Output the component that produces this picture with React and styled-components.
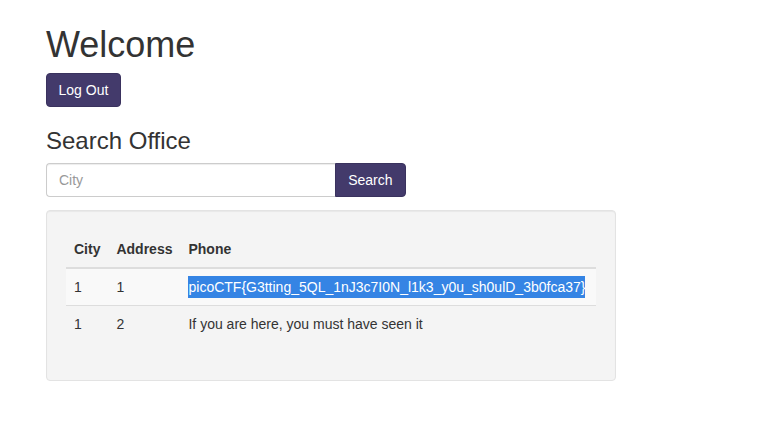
import React from 'react';
import styled, { createGlobalStyle } from 'styled-components';

const GlobalStyle = createGlobalStyle`
  html, body {
    margin: 0;
    padding: 0;
    background: #fff;
  }
  body {
    font-family: "Liberation Sans", Arial, Helvetica, sans-serif;
    font-size: 14px;
    line-height: 1.42857;
    color: #333;
  }
  * {
    box-sizing: border-box;
  }
`;

const Container = styled.div`
  padding: 3px 0 0 46px;
`;

const Title = styled.h1`
  font-size: 36px;
  font-weight: 500;
  line-height: 1.1;
  margin: 22px 0 8px;
`;

const Subtitle = styled.h3`
  font-size: 24px;
  font-weight: 500;
  line-height: 1.1;
  margin: 21px 0 9px;
`;

const Button = styled.button`
  display: inline-block;
  height: 34px;
  padding: ${(p) => (p.$attached ? '6px 12.5px' : '6px 11.5px')};
  font-family: inherit;
  font-size: 14px;
  line-height: 20px;
  color: #fff;
  background-color: #433a6b;
  border: 1px solid #3a325e;
  border-radius: ${(p) => (p.$attached ? '0 4px 4px 0' : '4px')};
  cursor: pointer;
`;

const SearchGroup = styled.form`
  display: flex;
  width: 360px;
  margin-bottom: 13px;
`;

const Input = styled.input`
  width: 289px;
  height: 34px;
  padding: 6px 12px;
  font-family: inherit;
  font-size: 14px;
  color: #555;
  background: #fff;
  border: 1px solid #ccc;
  border-right: none;
  border-radius: 4px 0 0 4px;
  box-shadow: inset 0 1px 1px rgba(0, 0, 0, 0.075);
  outline: none;

  &::placeholder {
    color: #999;
  }
`;

const Well = styled.div`
  width: 570px;
  min-height: 20px;
  padding: 20px 19px 18px;
  background-color: #f4f4f4;
  border: 1px solid #e3e3e3;
  border-radius: 4px;
  box-shadow: inset 0 1px 1px rgba(0, 0, 0, 0.05);
`;

const Table = styled.table`
  width: 100%;
  border-collapse: collapse;
  border-spacing: 0;
  margin-bottom: 20px;
`;

const Th = styled.th`
  text-align: left;
  padding: 8px;
  line-height: 20px;
  vertical-align: bottom;
  border-bottom: 2px solid #ddd;
  white-space: nowrap;
`;

const Row = styled.tr`
  background-color: ${(p) => (p.$striped ? '#f9f9f9' : 'transparent')};
`;

const Td = styled.td`
  padding: 8px;
  line-height: 20px;
  vertical-align: top;
  border-top: 1px solid #ddd;
  white-space: nowrap;
`;

const Selected = styled.span`
  background: #3584e4;
  color: #fff;
  padding: 3px 0;
`;

const rows = [
  { city: '1', address: '1', phone: 'picoCTF{G3tting_5QL_1nJ3c7I0N_l1k3_y0u_sh0ulD_3b0fca37}', selected: true },
  { city: '1', address: '2', phone: 'If you are here, you must have seen it' },
];

export default function App() {
  return (
    <>
      <GlobalStyle />
      <Container>
        <Title>Welcome</Title>
        <Button type="button">Log Out</Button>
        <Subtitle>Search Office</Subtitle>
        <SearchGroup onSubmit={(e) => e.preventDefault()}>
          <Input type="text" placeholder="City" />
          <Button type="submit" $attached>Search</Button>
        </SearchGroup>
        <Well>
          <Table>
            <thead>
              <tr>
                <Th>City</Th>
                <Th>Address</Th>
                <Th style={{ width: '100%' }}>Phone</Th>
              </tr>
            </thead>
            <tbody>
              {rows.map((r, i) => (
                <Row key={i} $striped={i % 2 === 0}>
                  <Td>{r.city}</Td>
                  <Td>{r.address}</Td>
                  <Td>{r.selected ? <Selected>{r.phone}</Selected> : r.phone}</Td>
                </Row>
              ))}
            </tbody>
          </Table>
        </Well>
      </Container>
    </>
  );
}
